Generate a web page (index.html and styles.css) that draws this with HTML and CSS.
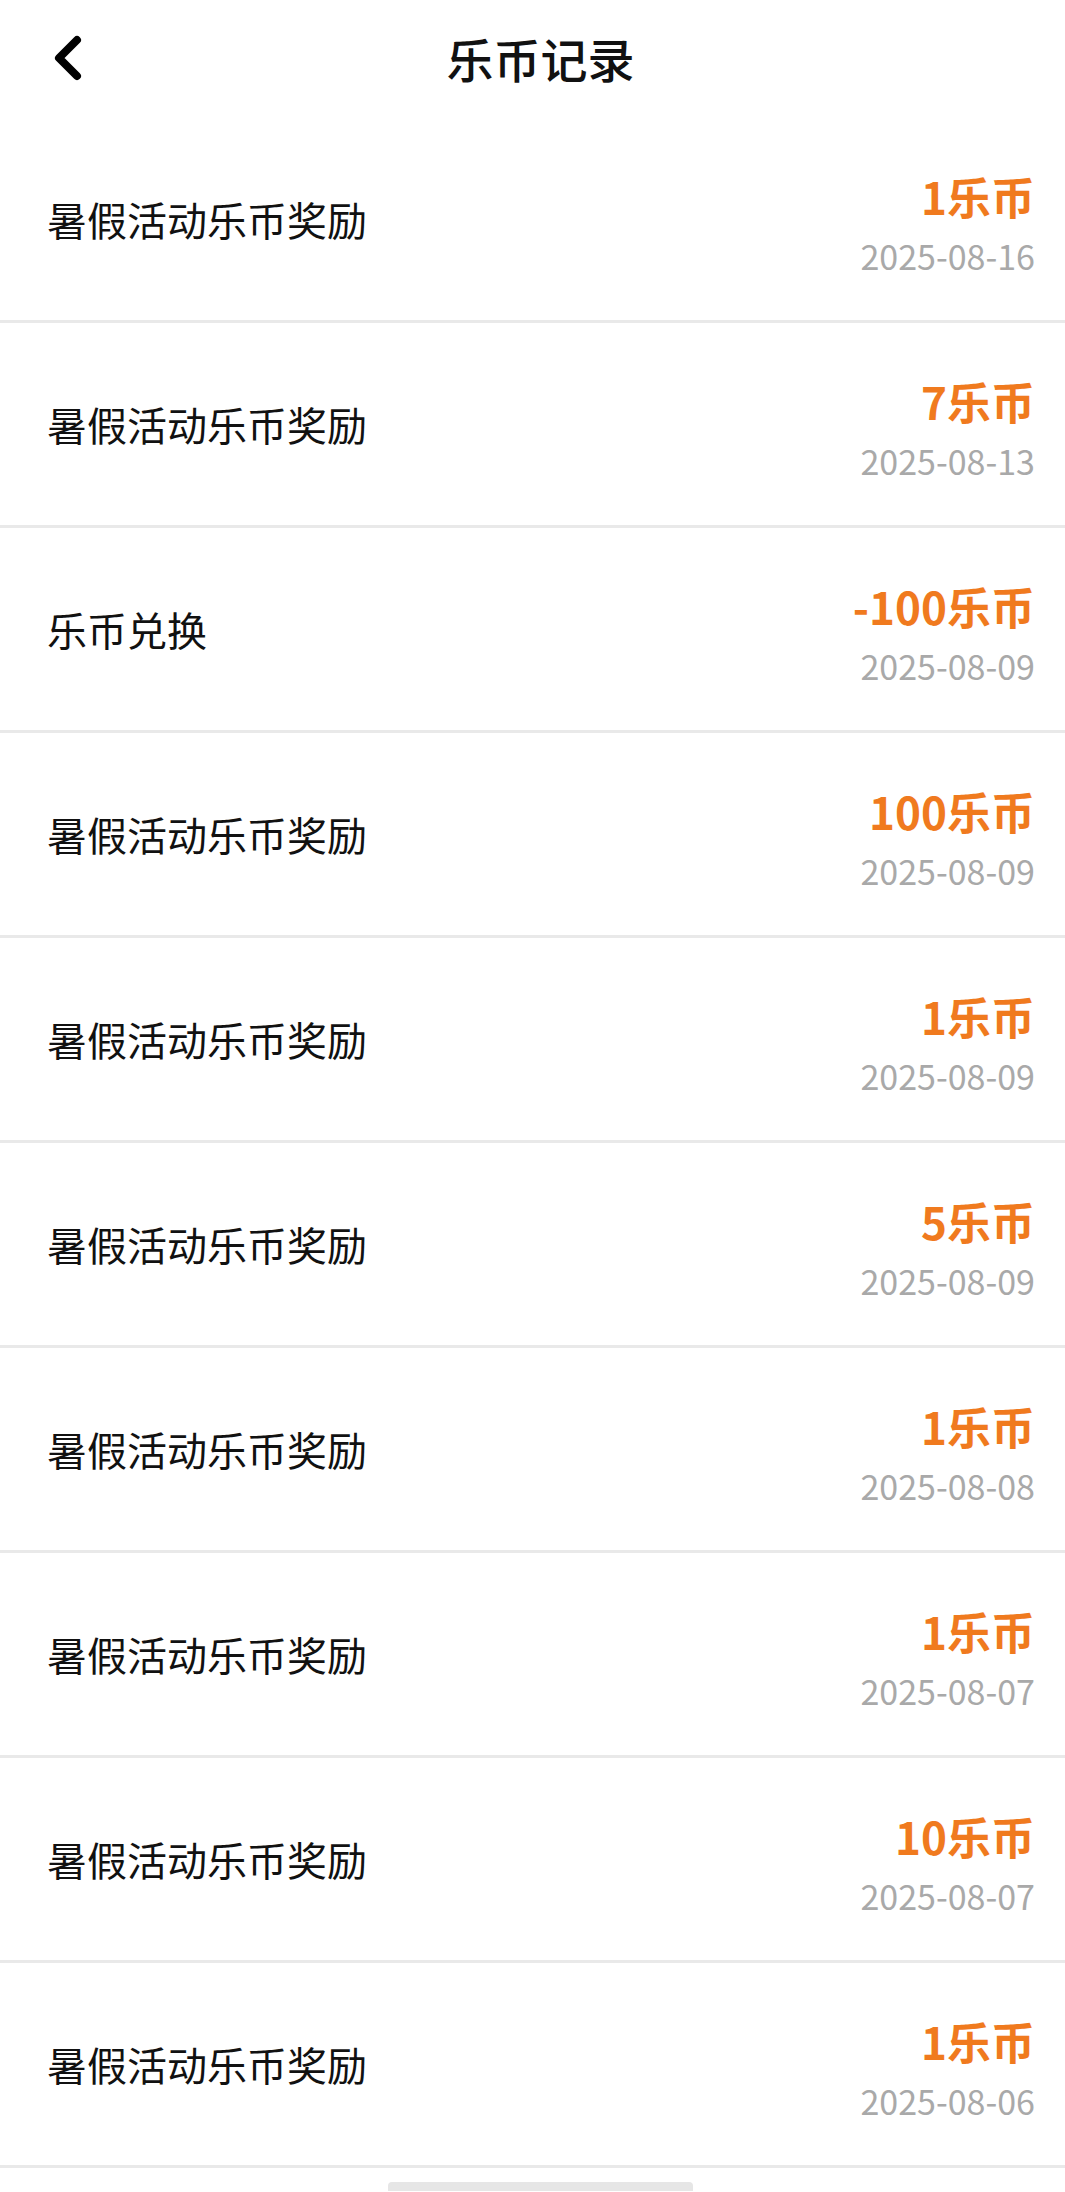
FILE: index.html
```html
<!DOCTYPE html>
<html lang="zh-CN">
<head>
    <meta charset="UTF-8">
    <title>乐币记录</title>
    <link rel="stylesheet" href="styles.css">
</head>
<body>
    <div class="header">
        <a class="back" href="#">
            <svg width="40" height="60" viewBox="0 0 40 60">
                <path d="M31 14 L13 32 L31 50" fill="none" stroke="#000" stroke-width="8" stroke-linecap="round" stroke-linejoin="round"/>
            </svg>
        </a>
        <h1>乐币记录</h1>
    </div>

    <ul class="records">
        <li><span class="name">暑假活动乐币奖励</span><div class="info"><span class="coins">1乐币</span><span class="date">2025-08-16</span></div></li>
        <li><span class="name">暑假活动乐币奖励</span><div class="info"><span class="coins">7乐币</span><span class="date">2025-08-13</span></div></li>
        <li><span class="name">乐币兑换</span><div class="info"><span class="coins">-100乐币</span><span class="date">2025-08-09</span></div></li>
        <li><span class="name">暑假活动乐币奖励</span><div class="info"><span class="coins">100乐币</span><span class="date">2025-08-09</span></div></li>
        <li><span class="name">暑假活动乐币奖励</span><div class="info"><span class="coins">1乐币</span><span class="date">2025-08-09</span></div></li>
        <li><span class="name">暑假活动乐币奖励</span><div class="info"><span class="coins">5乐币</span><span class="date">2025-08-09</span></div></li>
        <li><span class="name">暑假活动乐币奖励</span><div class="info"><span class="coins">1乐币</span><span class="date">2025-08-08</span></div></li>
        <li><span class="name">暑假活动乐币奖励</span><div class="info"><span class="coins">1乐币</span><span class="date">2025-08-07</span></div></li>
        <li><span class="name">暑假活动乐币奖励</span><div class="info"><span class="coins">10乐币</span><span class="date">2025-08-07</span></div></li>
        <li><span class="name">暑假活动乐币奖励</span><div class="info"><span class="coins">1乐币</span><span class="date">2025-08-06</span></div></li>
    </ul>

    <div class="footer"><div class="bar"></div></div>
</body>
</html>
```

FILE: styles.css
```css
body { margin: 0; background: #fff; font-family: "Noto Sans CJK SC", "Noto Sans", sans-serif; color: #111; }
.header { height: 118px; display: flex; align-items: center; justify-content: center; position: relative; }
.header h1 { margin: 0 0 4px 16px; font-size: 47px; font-weight: 500; line-height: 1; }
.back { position: absolute; left: 46px; top: 26px; display: block; }
.back svg { display: block; }
.records { list-style: none; margin: 0; padding: 0; }
.records li { height: 202px; border-bottom: 3px solid #e9e9e9; display: flex; align-items: center; justify-content: space-between; padding: 0 30px 0 47px; }
.name { font-size: 40px; line-height: 1; }
.info { display: flex; flex-direction: column; align-items: flex-end; padding-top: 8px; }
.coins { color: #f07a1e; font-size: 44px; font-weight: 700; line-height: 52px; margin-bottom: 13px; }
.date { color: #a9a9a9; font-size: 34px; line-height: 42px; }
.footer { padding: 14px 0 0 16px; display: flex; justify-content: center; }
.bar { width: 305px; height: 9px; background: #e6e6e6; border-radius: 4px 4px 0 0; }
```
